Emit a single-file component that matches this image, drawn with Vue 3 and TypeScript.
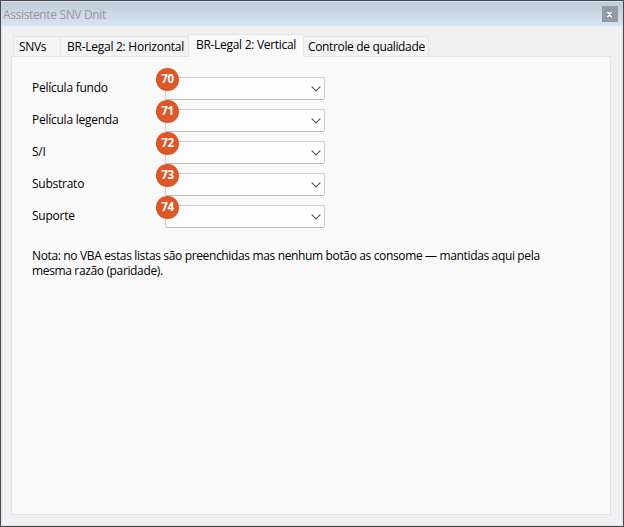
<script setup lang="ts">
import { ref } from 'vue'

interface Field { id: number; label: string }

const tabs: { name: string; key: string }[] = [
  { name: 'SNVs', key: 'snvs' },
  { name: 'BR-Legal 2: Horizontal', key: 'horizontal' },
  { name: 'BR-Legal 2: Vertical', key: 'vertical' },
  { name: 'Controle de qualidade', key: 'quality' },
]
const active = ref('vertical')

const fields: Field[] = [
  { id: 70, label: 'Película fundo' },
  { id: 71, label: 'Película legenda' },
  { id: 72, label: 'S/I' },
  { id: 73, label: 'Substrato' },
  { id: 74, label: 'Suporte' },
]
</script>

<template>
  <div class="window">
    <header class="titlebar">
      <span class="title">Assistente SNV Dnit</span>
      <button class="close" aria-label="Fechar">
        <svg width="6" height="5" viewBox="0 0 6 5" shape-rendering="crispEdges">
          <path d="M0 0h2v1h-2zM3 0h2v1h-2zM1 1h3v1h-3zM2 2h1v1h-1zM1 3h3v1h-3zM0 4h2v1h-2zM3 4h2v1h-2z" fill="#fff" />
        </svg>
      </button>
    </header>
    <main class="body">
      <nav class="tabs">
        <button
          v-for="tab in tabs"
          :key="tab.key"
          class="tab"
          :class="[tab.key, { active: tab.key === active }]"
          @click="active = tab.key"
        >{{ tab.name }}</button>
      </nav>
      <section class="panel">
        <div v-for="field in fields" :key="field.id" class="row">
          <span class="label">{{ field.label }}</span>
          <div class="combo">
            <svg class="chevron" width="10" height="6" viewBox="0 0 10 6">
              <path d="M0.7 0.7L5 5L9.3 0.7" fill="none" stroke="#555" stroke-width="1.1" />
            </svg>
            <span class="badge">{{ field.id }}</span>
          </div>
        </div>
        <p class="note">Nota: no VBA estas listas são preenchidas mas nenhum botão as consome — mantidas aqui pela<br>mesma razão (paridade).</p>
      </section>
    </main>
  </div>
</template>

<style>
body { overflow: hidden; }
</style>

<style scoped>
.window {
  box-sizing: border-box;
  width: 624px;
  height: 527px;
  display: flex;
  flex-direction: column;
  border: 1px solid #4b474b;
  background: #f0f0f0;
  font: 12px/15px "Open Sans", "Noto Sans", sans-serif;
  letter-spacing: -0.3px;
  color: #000;
}
button { font: inherit; letter-spacing: inherit; color: inherit; border: 0; padding: 0; margin: 0; }
.titlebar {
  box-sizing: border-box;
  height: 25px;
  flex: none;
  display: flex;
  justify-content: space-between;
  align-items: flex-start;
  padding: 4px 5px 0 2px;
  border-top: 1px solid #d7e4f2;
  background: linear-gradient(#bfcddb, #d7e4f2);
}
.title { color: #999; padding-top: 1px; letter-spacing: -0.35px; white-space: nowrap; }
.close {
  width: 16px;
  height: 16px;
  display: flex;
  align-items: center;
  justify-content: center;
  background: #919ba5;
}
.body {
  box-sizing: border-box;
  flex: 1;
  display: flex;
  flex-direction: column;
  padding: 8px 11px 10px 9px;
  border: 1px solid #d7e4f2;
  border-top: 0;
}
.tabs { display: flex; align-items: flex-end; height: 22px; padding-left: 2px; flex: none; }
.tab {
  box-sizing: border-box;
  height: 20px;
  text-align: left;
  white-space: nowrap;
  background: #f3f3f3;
  border: 1px solid #e5e5e5;
  border-bottom: 0;
  border-right: 0;
  padding-left: 6px;
}
.snvs { width: 47px; padding-left: 5px; }
.horizontal { width: 128px; letter-spacing: -0.26px; }
.vertical { width: 115px; padding-left: 7px; }
.quality { width: 126px; border-right: 1px solid #e5e5e5; padding-left: 4px; letter-spacing: -0.35px; }
.tab.active { height: 23px; margin-bottom: -1px; padding-bottom: 3px; background: #f9f9f9; position: relative; }
.panel {
  box-sizing: border-box;
  flex: 1;
  border: 1px solid #e3e3e3;
  background: #f9f9f9;
  padding: 20px 20px 0;
}
.row { display: flex; height: 23px; margin-bottom: 9px; }
.label { width: 133px; padding-top: 3px; letter-spacing: -0.25px; white-space: nowrap; }
.combo {
  position: relative;
  box-sizing: border-box;
  width: 160px;
  height: 23px;
  display: flex;
  align-items: center;
  justify-content: flex-end;
  padding-right: 3px;
  border: 1px solid #ccc;
  border-bottom-color: #b9b9b9;
  border-radius: 2px;
  background: #fdfdfd;
}
.badge {
  position: absolute;
  left: -9.7px;
  top: -9.7px;
  width: 22.5px;
  height: 22.5px;
  border-radius: 50%;
  background: #dc5828;
  color: #fff;
  font-weight: 700;
  font-size: 11.5px;
  line-height: 22px;
  letter-spacing: -0.3px;
  text-align: center;
}
.note { margin: 20px 0 0; letter-spacing: -0.355px; white-space: nowrap; }
</style>
